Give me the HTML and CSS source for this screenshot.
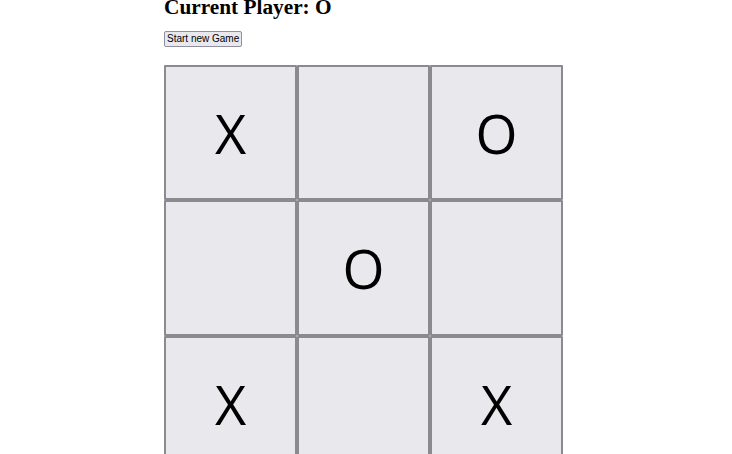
FILE: index.html
```html
<!DOCTYPE html>
<html>
<head>
<meta charset="utf-8">
<link rel="stylesheet" href="styles.css">
</head>
<body>
<main class="game">
  <h2 class="status">Current Player: O</h2>
  <button class="restart">Start new Game</button>
  <div class="board">
    <div class="cell">X</div>
    <div class="cell"></div>
    <div class="cell">O</div>
    <div class="cell"></div>
    <div class="cell">O</div>
    <div class="cell"></div>
    <div class="cell">X</div>
    <div class="cell"></div>
    <div class="cell">X</div>
  </div>
</main>
</body>
</html>
```
FILE: styles.css
```css
html, body {
  margin: 0;
  padding: 0;
  background: #ffffff;
}
body {
  font-family: "Liberation Serif", serif;
}
.game {
  padding-left: 164px;
  display: flex;
  flex-direction: column;
  align-items: flex-start;
}
.status {
  margin: -5px 0 0 0;
  font-size: 21.3px;
  font-weight: bold;
  line-height: 24px;
  color: #000;
}
.restart {
  margin-top: 12px;
  font-family: "Liberation Sans", Arial, sans-serif;
  font-size: 10px;
  line-height: 12px;
  padding: 1px 2px;
  background: #e9e9ed;
  border: 1px solid #8f8f9d;
  border-radius: 2px;
  color: #000;
}
.board {
  margin-top: 18px;
  display: grid;
  grid-template-columns: repeat(3, 133px);
  grid-template-rows: 135px 136px 136px;
}
.cell {
  box-sizing: border-box;
  background: #e9e9ed;
  border: 2px solid #8a8a90;
  border-radius: 1px;
  display: flex;
  align-items: center;
  justify-content: center;
  font-family: "Open Sans", sans-serif;
  font-size: 54px;
  color: #000;
  padding-top: 0;
}
```
